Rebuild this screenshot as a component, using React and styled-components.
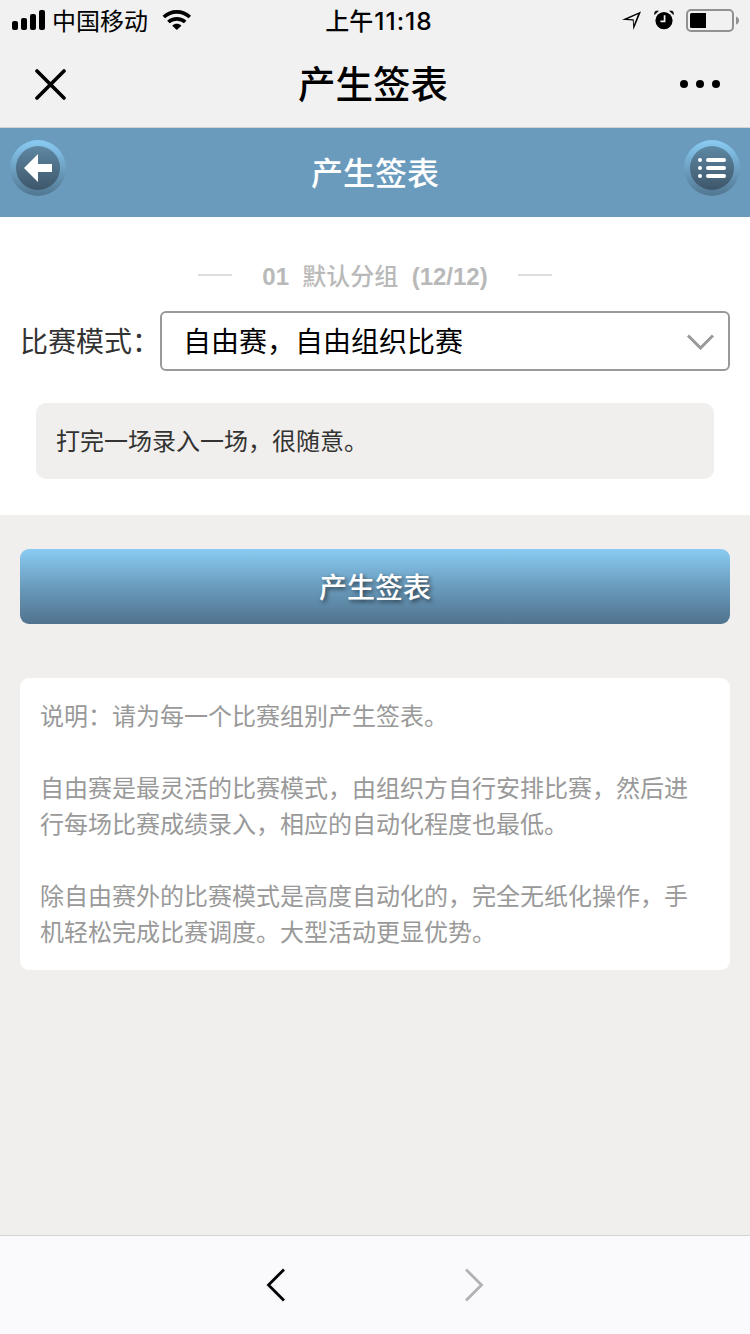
import React, { useState } from 'react';
import styled, { createGlobalStyle } from 'styled-components';

const GlobalStyle = createGlobalStyle`
    body {
        margin: 0;
        background: #f0efed;
        font-family: "Liberation Sans", "Noto Sans CJK SC", sans-serif;
    }

    * {
        box-sizing: border-box;
    }

    p, h1, h2 {
        margin: 0;
    }

    svg {
        display: block;
    }

    button {
        border: none;
        padding: 0;
        background: none;
        font-family: inherit;
    }
`;

const Page = styled.div`
    width: 750px;
    height: 1334px;
    display: flex;
    flex-direction: column;
    overflow: hidden;
`;

const StatusBar = styled.div`
    height: 40px;
    padding: 0 11px 0 12px;
    display: grid;
    grid-template-columns: 1fr auto 1fr;
    grid-template-rows: 40px;
    align-items: center;
    background: #f1f1f1;
`;

const StatusGroup = styled.div`
    height: 40px;
    display: flex;
    align-items: center;
    gap: ${(props) => props.$gap || 0}px;
    justify-content: ${(props) => (props.$end ? 'flex-end' : 'flex-start')};
`;

const Carrier = styled.span`
    margin: 0 14px 0 7px;
    font-family: "Noto Sans CJK SC", sans-serif;
    font-size: 24px;
    line-height: 40px;
`;

const Clock = styled.span`
    padding: 2px 0 0 7px;
    font-family: Inter, "Noto Sans CJK SC", sans-serif;
    font-size: 24px;
    font-weight: 500;
    line-height: 38px;
`;

const ClockDigits = styled.span`
    margin-left: 1px;
    font-size: 24.5px;
    letter-spacing: 1px;
`;

const NavBar = styled.div`
    height: 88px;
    padding: 0 30px 0 35px;
    display: flex;
    align-items: center;
    justify-content: space-between;
    background: #f1f1f1;
    border-bottom: 1px solid #d3d3d3;
`;

const NavTitle = styled.h1`
    padding-bottom: 4px;
    font-family: "Noto Sans CJK SC", sans-serif;
    font-size: 37.5px;
    font-weight: 500;
    line-height: 83px;
`;

const Header = styled.div`
    height: 89px;
    padding: 0 10px;
    display: flex;
    align-items: flex-start;
    justify-content: space-between;
    background: #6b9bbc;
`;

const HeaderTitle = styled.h2`
    padding-top: 1px;
    color: #fff;
    font-size: 32px;
    font-weight: 500;
    line-height: 90px;
`;

const RoundButton = styled.button`
    width: 56px;
    height: 56px;
    margin-top: 12px;
    padding: 6px;
    border-radius: 50%;
    background: linear-gradient(#8accf4, #517691);
`;

const RoundInner = styled.span`
    width: 44px;
    height: 44px;
    display: flex;
    align-items: center;
    justify-content: center;
    border-radius: 50%;
    background: linear-gradient(#5e88a3, #3e566a);
`;

const Section = styled.div`
    height: 298px;
    padding-top: 42px;
    background: #fff;
`;

const GroupTitle = styled.div`
    display: flex;
    align-items: center;
    justify-content: center;
    gap: 30px;
    height: 36px;
    color: #b9b9b9;
    font-size: 24px;
    font-weight: 700;
    white-space: pre;
`;

const GroupText = styled.span`
    padding-bottom: 5px;
`;

const GroupName = styled.span`
    font-weight: 500;
`;

const Line = styled.span`
    width: 34px;
    height: 2px;
    margin-bottom: 4px;
    background: #dedede;
`;

const ModeRow = styled.div`
    margin-top: 16px;
    padding: 0 20px;
    display: flex;
    align-items: center;
`;

const ModeLabel = styled.span`
    width: 140px;
    padding-top: 4px;
    color: #333;
    font-size: 28px;
    line-height: 56px;
`;

const SelectBox = styled.div`
    flex: 1;
    height: 60px;
    padding: 0 14px 0 21px;
    display: flex;
    align-items: center;
    justify-content: space-between;
    border: 2px solid #999;
    border-radius: 6px;
    color: #000;
    font-size: 28px;
`;

const SelectText = styled.span`
    padding-top: 4px;
    line-height: 52px;
`;

const ModeTip = styled.div`
    height: 76px;
    margin: 32px 36px 0;
    padding: 1px 0 0 20px;
    border-radius: 10px;
    background: #f0efed;
    color: #333;
    font-size: 24px;
    line-height: 75px;
`;

const SubmitButton = styled.button`
    height: 75px;
    margin: 34px 20px 0;
    padding-top: 4px;
    border-radius: 9px;
    background: linear-gradient(#8acbf3, #6a9cbd 50%, #50738e);
    color: #fff;
    font-size: 28px;
    font-weight: 500;
    line-height: 71px;
    text-shadow: 2px 2px 4px rgba(0, 0, 0, 0.6);
`;

const Description = styled.div`
    margin: 54px 20px 0;
    padding: 21px 20px 19px;
    border-radius: 9px;
    background: #fff;
    color: #999;
    font-size: 24px;
    line-height: 36px;

    p:not(:last-child) {
        margin-bottom: 36px;
    }
`;

const Toolbar = styled.div`
    height: 99px;
    margin-top: auto;
    display: flex;
    align-items: center;
    justify-content: center;
    gap: 178px;
    border-top: 1px solid #d5d4d3;
    background: #fafafc;
`;

const SignalIcon = () => (
    <svg width="33" height="20" viewBox="0 0 33 20">
        <rect x="0" y="11" width="6" height="9" rx="2" />
        <rect x="9" y="8" width="6" height="12" rx="2" />
        <rect x="18" y="4" width="6" height="16" rx="2" />
        <rect x="27" y="0" width="6" height="20" rx="2" />
    </svg>
);

const WifiIcon = () => (
    <svg width="30" height="20" viewBox="0 0 30 20">
        <g fill="none" stroke="#000" strokeWidth="3.6">
            <path d="M1.8 7C9 .1 20.6 .1 27.8 7" />
            <path d="M6.4 12C11 7.8 18.6 7.8 23.2 12" />
        </g>
        <path d="M10.2 15.8C12.8 13.2 16.8 13.2 19.4 15.8L14.8 20Z" />
    </svg>
);

const LocationIcon = () => (
    <svg width="20" height="20" viewBox="0 0 20 20">
        <path d="M0 9.8L19 1.4L11.4 20L10.8 10.4Z" />
        <path d="M5.6 9.1L16 4.3L11.9 14.8L11.7 9.3Z" fill="#f1f1f1" />
    </svg>
);

const AlarmIcon = () => (
    <svg width="20" height="20" viewBox="0 0 20 20">
        <circle cx="10" cy="10.6" r="8.6" />
        <path d="M.6 4.6V3Q.6 1 2.6 1H4.4ZM19.4 4.6V3Q19.4 1 17.4 1H15.6Z" stroke="#000" strokeWidth=".6" />
        <path d="M10.6 5.2V11.4H6.4" fill="none" stroke="#f1f1f1" strokeWidth="1.7" />
    </svg>
);

const BatteryIcon = () => (
    <svg width="53" height="23" viewBox="0 0 53 23">
        <rect x="1" y="1" width="46" height="21" rx="4" fill="none" stroke="#919191" strokeWidth="2" />
        <path d="M5.5 4H20V19H5.5Q4 19 4 17.5V5.5Q4 4 5.5 4Z" />
        <path d="M50 7.5Q53 8.5 53 11.5T50 15.5Z" fill="#919191" />
    </svg>
);

const CloseIcon = () => (
    <svg width="31" height="32" viewBox="0 0 31 32">
        <path d="M2 3L29 30M29 3L2 30" stroke="#000" strokeWidth="3.6" strokeLinecap="round" />
    </svg>
);

const MoreIcon = () => (
    <svg width="40" height="8" viewBox="0 0 40 8">
        <circle cx="4" cy="4" r="4" />
        <circle cx="20" cy="4" r="4" />
        <circle cx="36" cy="4" r="4" />
    </svg>
);

const BackIcon = () => (
    <svg width="28" height="28" viewBox="0 0 28 28">
        <path d="M0 14L14 0V10H28V18H14V28Z" fill="#fff" />
    </svg>
);

const ListIcon = () => (
    <svg width="28" height="20" viewBox="0 0 28 20" fill="#fff">
        {[0, 8, 16].map((y) => (
            <g key={y}>
                <circle cx="2" cy={y + 2} r="2" />
                <rect x="8" y={y} width="20" height="4" rx="2" />
            </g>
        ))}
    </svg>
);

const DownIcon = () => (
    <svg width="28" height="18" viewBox="0 0 28 18">
        <path d="M2 3.5L14.5 16L27 3.5" fill="none" stroke="#999" strokeWidth="3" />
    </svg>
);

const PageIcon = ({ color, d }) => (
    <svg width="20" height="34" viewBox="0 0 20 34">
        <path d={d} fill="none" stroke={color} strokeWidth="2.8" strokeLinecap="square" />
    </svg>
);

const modes = [
    { name: '自由赛，自由组织比赛', tip: '打完一场录入一场，很随意。' },
];

function App() {
    const [mode] = useState(modes[0]);

    return (
        <Page>
            <GlobalStyle />
            <StatusBar>
                <StatusGroup>
                    <SignalIcon />
                    <Carrier>中国移动</Carrier>
                    <WifiIcon />
                </StatusGroup>
                <Clock>上午<ClockDigits>11:18</ClockDigits></Clock>
                <StatusGroup $end $gap={12}>
                    <LocationIcon />
                    <AlarmIcon />
                    <BatteryIcon />
                </StatusGroup>
            </StatusBar>
            <NavBar>
                <CloseIcon />
                <NavTitle>产生签表</NavTitle>
                <MoreIcon />
            </NavBar>
            <Header>
                <RoundButton>
                    <RoundInner><BackIcon /></RoundInner>
                </RoundButton>
                <HeaderTitle>产生签表</HeaderTitle>
                <RoundButton>
                    <RoundInner><ListIcon /></RoundInner>
                </RoundButton>
            </Header>
            <Section>
                <GroupTitle>
                    <Line />
                    <GroupText>01  <GroupName>默认分组</GroupName>  (12/12)</GroupText>
                    <Line />
                </GroupTitle>
                <ModeRow>
                    <ModeLabel>比赛模式：</ModeLabel>
                    <SelectBox>
                        <SelectText>{mode.name}</SelectText>
                        <DownIcon />
                    </SelectBox>
                </ModeRow>
                <ModeTip>{mode.tip}</ModeTip>
            </Section>
            <SubmitButton>产生签表</SubmitButton>
            <Description>
                <p>说明：请为每一个比赛组别产生签表。</p>
                <p>自由赛是最灵活的比赛模式，由组织方自行安排比赛，然后进行每场比赛成绩录入，相应的自动化程度也最低。</p>
                <p>除自由赛外的比赛模式是高度自动化的，完全无纸化操作，手机轻松完成比赛调度。大型活动更显优势。</p>
            </Description>
            <Toolbar>
                <PageIcon color="#000" d="M17 2.5L2.5 17L17 31.5" />
                <PageIcon color="#b2b2b2" d="M3 2.5L17.5 17L3 31.5" />
            </Toolbar>
        </Page>
    );
}

export default App;
